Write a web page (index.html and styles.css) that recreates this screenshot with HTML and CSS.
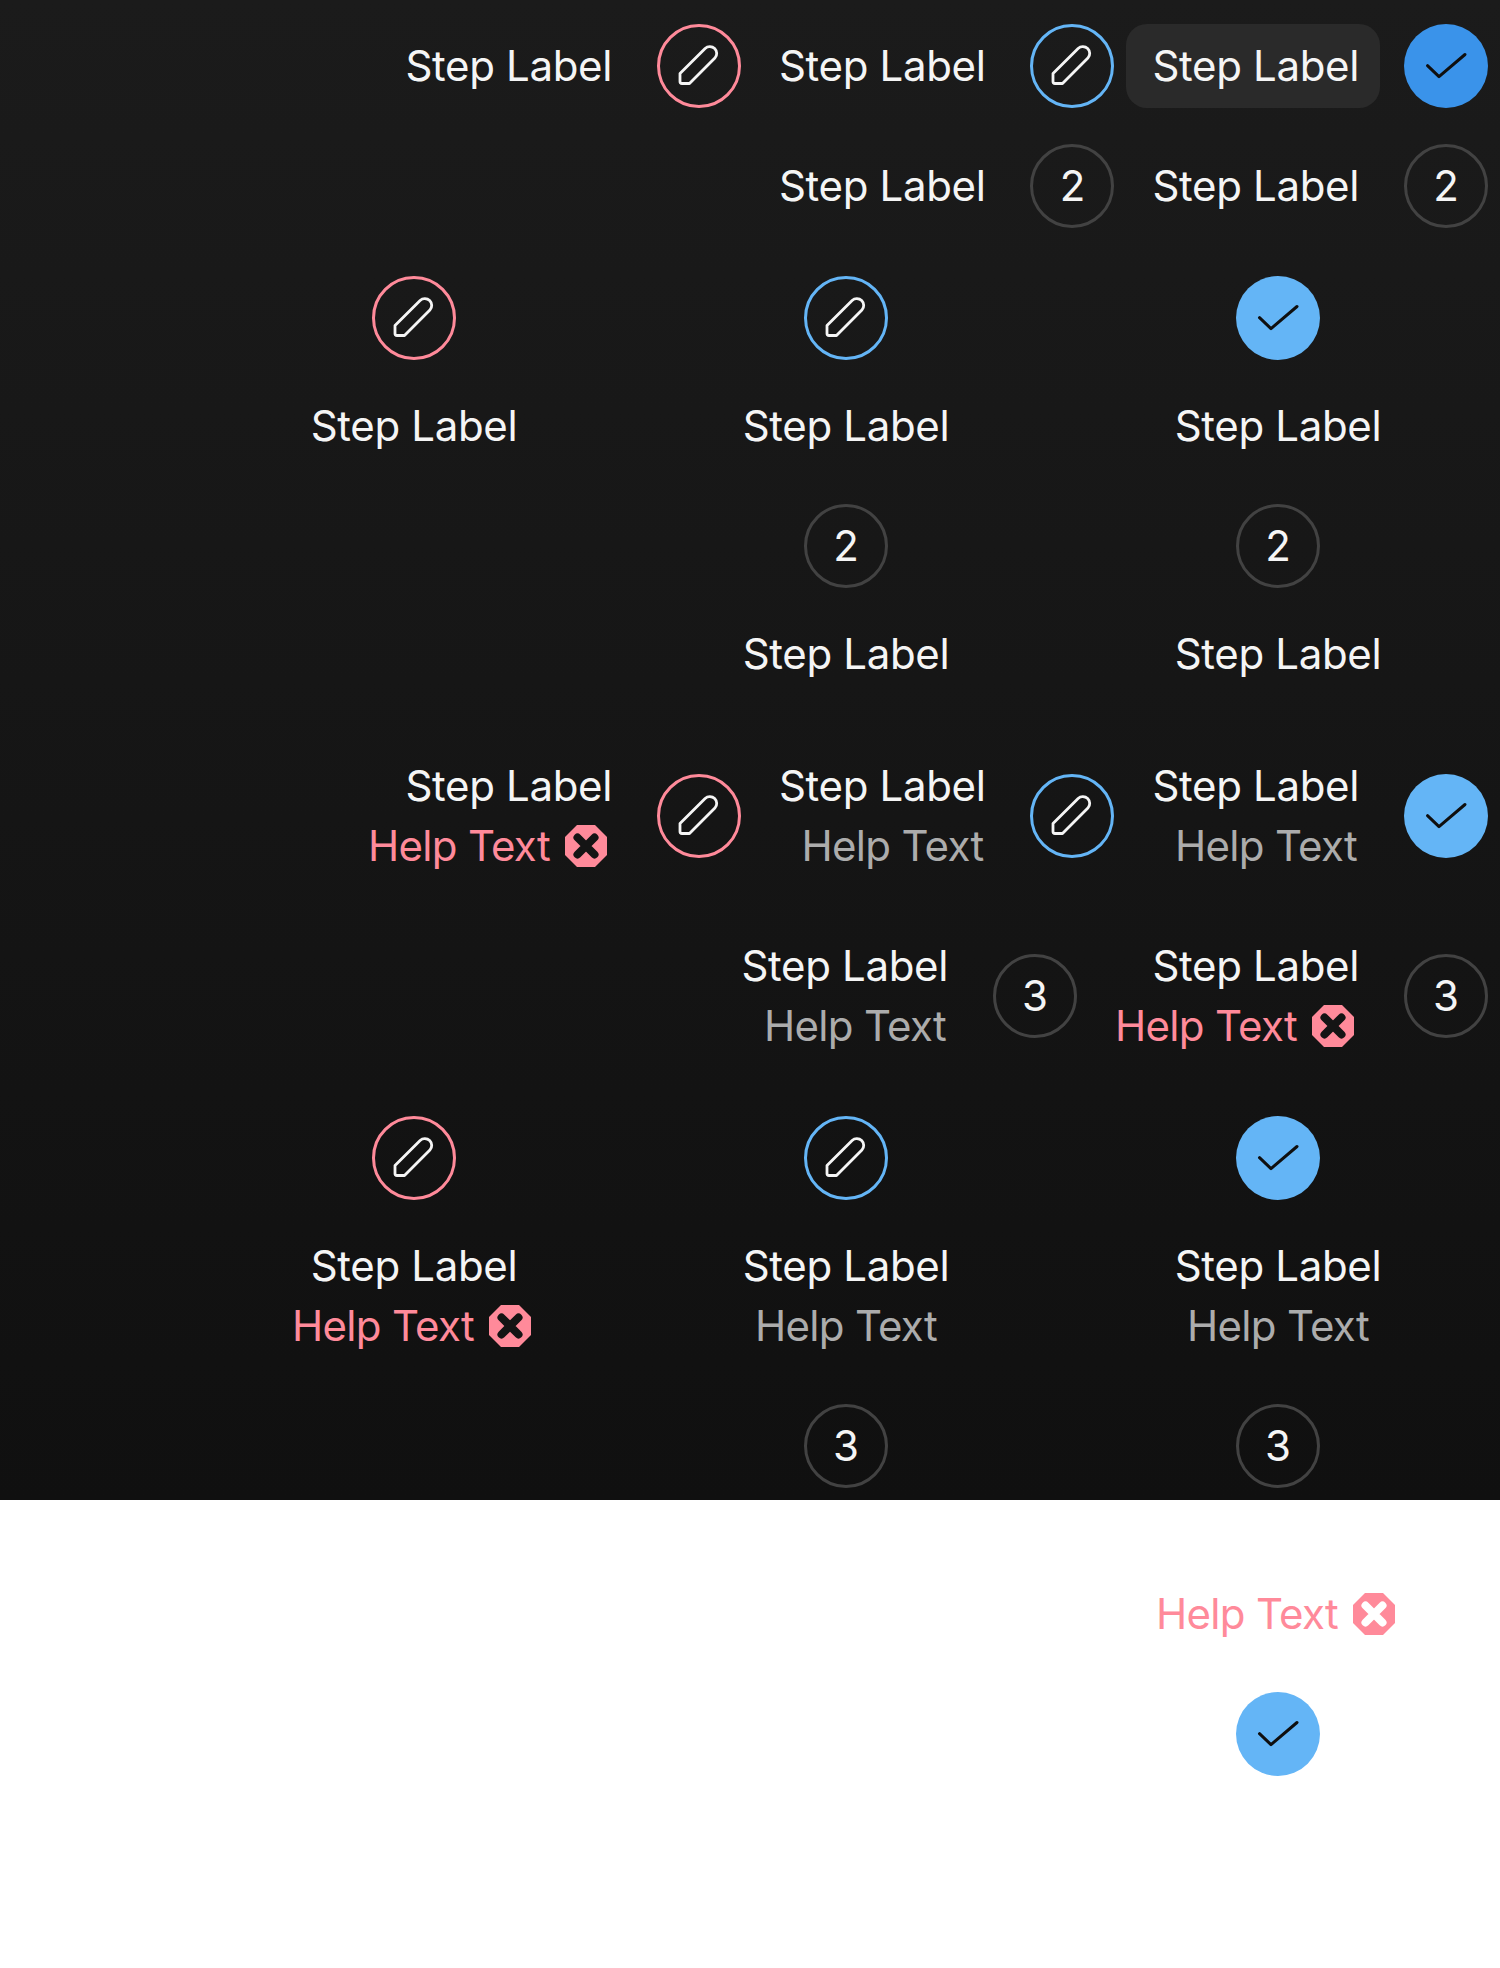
FILE: index.html
```html
<!DOCTYPE html>
<html lang="en">
<head>
<meta charset="utf-8">
<title>Steppers</title>
<link rel="stylesheet" href="styles.css">
</head>
<body>
<svg class="defs" width="0" height="0" aria-hidden="true">
  <symbol id="pencil" viewBox="0 0 84 84"><path d="M23 49.5 48.1 24.4A6.9 6.9 0 0 1 57.9 34.1L32.5 59.5H25A2 2 0 0 1 23 57.5Z" fill="none" stroke="currentColor" stroke-width="2.8" stroke-linejoin="round"/></symbol>
  <symbol id="check" viewBox="0 0 84 84"><path d="M23.5 41.7 35 52.6 61 30.5" fill="none" stroke="currentColor" stroke-width="3" stroke-linecap="round" stroke-linejoin="round"/></symbol>
  <symbol id="err" viewBox="0 0 42 42"><path d="M12 0H30L42 12V30L30 42H12L0 30V12Z" fill="#ff8a9a"/><path d="M12.5 12.5 29.5 29.5M29.5 12.5 12.5 29.5" fill="none" stroke="var(--x)" stroke-width="8" stroke-linecap="round"/></symbol>
</svg>
<main class="dark">
  <div class="row">
    <div class="hstep"><div class="head"><span class="label">Step Label</span></div><span class="circle error"><svg class="ico"><use href="#pencil"/></svg></span></div>
    <div class="hstep"><div class="head"><span class="label">Step Label</span></div><span class="circle active"><svg class="ico"><use href="#pencil"/></svg></span></div>
    <div class="hstep"><div class="head hover"><span class="label">Step Label</span></div><span class="circle done-hover"><svg class="ico"><use href="#check"/></svg></span></div>
  </div>
  <div class="row gap-s">
    <div class="hstep"><div class="head"><span class="label">Step Label</span></div><span class="circle idle">2</span></div>
    <div class="hstep"><div class="head"><span class="label">Step Label</span></div><span class="circle idle">2</span></div>
  </div>
  <div class="cols gap-m">
    <div class="vstep"><span class="circle error"><svg class="ico"><use href="#pencil"/></svg></span><div class="vtext"><span class="label">Step Label</span></div></div>
    <div class="vstep"><span class="circle active"><svg class="ico"><use href="#pencil"/></svg></span><div class="vtext"><span class="label">Step Label</span></div></div>
    <div class="vstep"><span class="circle done"><svg class="ico"><use href="#check"/></svg></span><div class="vtext"><span class="label">Step Label</span></div></div>
  </div>
  <div class="cols gap-m">
    <div class="vstep"><span class="circle idle">2</span><div class="vtext"><span class="label">Step Label</span></div></div>
    <div class="vstep"><span class="circle idle">2</span><div class="vtext"><span class="label">Step Label</span></div></div>
  </div>
  <div class="row gap-l">
    <div class="hstep"><div class="head"><span class="label">Step Label</span><span class="help err">Help Text<svg class="err-ico"><use href="#err"/></svg></span></div><span class="circle error"><svg class="ico"><use href="#pencil"/></svg></span></div>
    <div class="hstep"><div class="head"><span class="label">Step Label</span><span class="help side">Help Text</span></div><span class="circle active"><svg class="ico"><use href="#pencil"/></svg></span></div>
    <div class="hstep"><div class="head"><span class="label">Step Label</span><span class="help side">Help Text</span></div><span class="circle done"><svg class="ico"><use href="#check"/></svg></span></div>
  </div>
  <div class="row gap-xl">
    <div class="hstep"><div class="head"><span class="label">Step Label</span><span class="help side">Help Text</span></div><span class="circle idle">3</span></div>
    <div class="hstep"><div class="head"><span class="label">Step Label</span><span class="help err">Help Text<svg class="err-ico"><use href="#err"/></svg></span></div><span class="circle idle">3</span></div>
  </div>
  <div class="cols gap-xl">
    <div class="vstep"><span class="circle error"><svg class="ico"><use href="#pencil"/></svg></span><div class="vtext"><span class="label">Step Label</span><span class="help err">Help Text<svg class="err-ico"><use href="#err"/></svg></span></div></div>
    <div class="vstep"><span class="circle active"><svg class="ico"><use href="#pencil"/></svg></span><div class="vtext"><span class="label">Step Label</span><span class="help">Help Text</span></div></div>
    <div class="vstep"><span class="circle done"><svg class="ico"><use href="#check"/></svg></span><div class="vtext"><span class="label">Step Label</span><span class="help">Help Text</span></div></div>
  </div>
  <div class="cols gap-m">
    <div class="vstep"><span class="circle idle">3</span></div>
    <div class="vstep"><span class="circle idle">3</span></div>
  </div>
</main>
<section class="light">
  <div class="vstep">
    <span class="help err">Help Text<svg class="err-ico"><use href="#err"/></svg></span>
    <span class="circle done last"><svg class="ico"><use href="#check"/></svg></span>
  </div>
</section>
</body>
</html>
```
FILE: styles.css
```css
html, body {
  margin: 0;
  padding: 0;
  background: #fff;
}
body {
  font-family: "Inter", "Liberation Sans", sans-serif;
  font-size: 42px;
  line-height: 60px;
  color: #f5f5f5;
}
.defs {
  display: block;
  height: 0;
}
.dark {
  --x: #141414;
  box-sizing: border-box;
  height: 1500px;
  padding: 24px 12px 0 0;
  background: linear-gradient(180deg, #1b1b1b 0%, #101010 100%);
  overflow: hidden;
}
.light {
  --x: #fff;
  box-sizing: border-box;
  height: 468px;
  padding: 84px 6px 0 0;
  display: flex;
  justify-content: flex-end;
}
.row {
  display: flex;
  justify-content: flex-end;
  gap: 12px;
}
.cols {
  display: flex;
  justify-content: flex-end;
  margin-right: -6px;
}
.gap-s { margin-top: 36px; }
.gap-m { margin-top: 48px; }
.gap-l { margin-top: 72px; }
.gap-xl { margin-top: 60px; }
.hstep {
  display: flex;
  align-items: center;
  gap: 24px;
}
.head {
  display: flex;
  flex-direction: column;
  align-items: flex-end;
  justify-content: center;
  min-height: 84px;
  padding: 0 21px 0 26px;
  border-radius: 21px;
}
.head.hover {
  background: #2a2a2a;
}
.vstep {
  display: flex;
  flex-direction: column;
  align-items: center;
  width: 432px;
}
.vtext {
  display: flex;
  flex-direction: column;
  align-items: center;
  margin-top: 36px;
}
.label,
.help {
  display: flex;
  align-items: center;
  white-space: nowrap;
}
.label {
  letter-spacing: -0.35px;
}
.help {
  color: #acacac;
  letter-spacing: -0.7px;
}
.help.side {
  margin-right: 2px;
}
.help.err {
  color: #ff8a9a;
}
.err-ico {
  width: 42px;
  height: 42px;
  margin: 0 5px 0 15px;
}
.circle {
  box-sizing: border-box;
  flex: none;
  display: flex;
  align-items: center;
  justify-content: center;
  width: 84px;
  height: 84px;
  border-radius: 50%;
  color: #f5f5f5;
}
.circle.last {
  margin-top: 48px;
}
.circle.error {
  border: 3px solid #ff8a9a;
}
.circle.active {
  border: 3px solid #64b5f6;
}
.circle.idle {
  border: 3px solid #424242;
}
.circle.done {
  background: #64b5f6;
  color: #0f0f0f;
}
.circle.done-hover {
  background: #3a93ea;
  color: #0f0f0f;
}
.ico {
  width: 84px;
  height: 84px;
  flex: none;
  margin: -3px;
}
.done .ico,
.done-hover .ico {
  margin: 0;
}
```
